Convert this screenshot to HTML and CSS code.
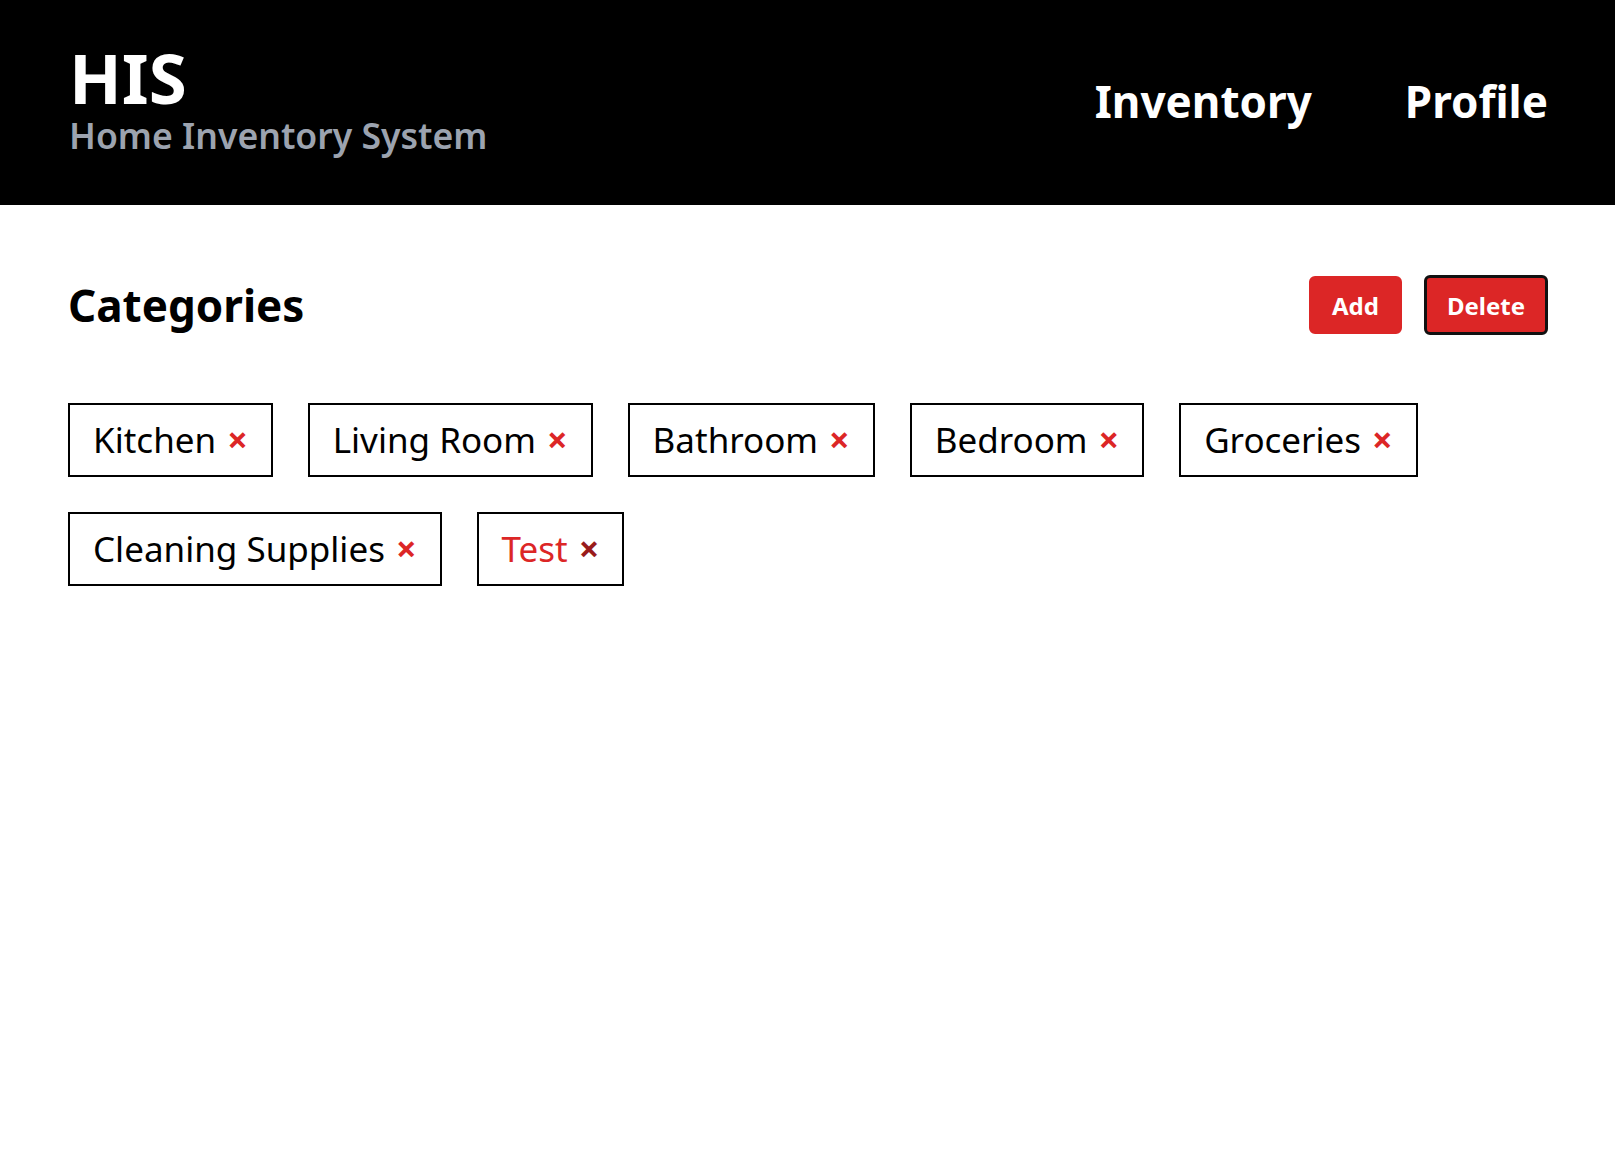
FILE: index.html
```html
<!DOCTYPE html>
<html lang="en">
<head>
<meta charset="utf-8">
<title>HIS - Home Inventory System</title>
<link rel="stylesheet" href="styles.css">
</head>
<body>
<header class="header">
  <div class="brand">
    <div class="brand-title">HIS</div>
    <div class="brand-sub">Home Inventory System</div>
  </div>
  <nav class="nav">
    <a class="nav-link" href="#">Inventory</a>
    <a class="nav-link" href="#">Profile</a>
  </nav>
</header>
<main class="main">
  <div class="toolbar">
    <h1 class="heading">Categories</h1>
    <div class="actions">
      <button class="btn">Add</button>
      <button class="btn btn-active">Delete</button>
    </div>
  </div>
  <ul class="tags">
    <li class="tag"><span class="tag-name">Kitchen</span><span class="tag-x">×</span></li>
    <li class="tag"><span class="tag-name">Living Room</span><span class="tag-x">×</span></li>
    <li class="tag"><span class="tag-name">Bathroom</span><span class="tag-x">×</span></li>
    <li class="tag"><span class="tag-name">Bedroom</span><span class="tag-x">×</span></li>
    <li class="tag"><span class="tag-name">Groceries</span><span class="tag-x">×</span></li>
    <li class="tag"><span class="tag-name">Cleaning Supplies</span><span class="tag-x">×</span></li>
    <li class="tag tag-hover"><span class="tag-name">Test</span><span class="tag-x">×</span></li>
  </ul>
</main>
</body>
</html>
```

FILE: styles.css
```css
* { box-sizing: border-box; }
html, body { margin: 0; padding: 0; background: #fff; }
body { font-family: "Noto Sans", "Open Sans", sans-serif; color: #000; }

.header {
  background: #000;
  height: 205px;
  display: flex;
  align-items: center;
  justify-content: space-between;
  padding: 0 67px 0 69px;
}
.brand {
  display: flex;
  flex-direction: column;
  align-self: flex-start;
  margin-top: 46px;
}
.brand-title {
  color: #fff;
  font-weight: 700;
  font-size: 69px;
  line-height: 62px;
}
.brand-sub {
  color: #9ca3af;
  font-weight: 600;
  font-size: 35.6px;
  line-height: 54px;
}
.nav { display: flex; gap: 93px; margin-bottom: 4px; }
.nav-link {
  color: #fff;
  text-decoration: none;
  font-weight: 700;
  font-size: 44px;
}

.main { padding: 70px 67px 0 68px; }
.toolbar {
  display: flex;
  align-items: center;
  justify-content: space-between;
  height: 60px;
}
.heading {
  margin: 0;
  font-size: 44px;
  font-weight: 700;
}
.actions { display: flex; gap: 22px; align-items: center; }
.btn {
  font-family: inherit;
  background: #dc2626;
  color: #fff;
  font-weight: 700;
  font-size: 24px;
  border: 2px solid #dc2626;
  border-radius: 6px;
  height: 58px;
  padding: 0 21px;
}
.btn-active { border: 3px solid #111; height: 60px; padding: 0 20px; }

.tags {
  list-style: none;
  margin: 68px 0 0;
  padding: 0;
  display: flex;
  flex-wrap: wrap;
  gap: 35px;
}
.tag {
  display: flex;
  align-items: center;
  gap: 11px;
  border: 2px solid #000;
  padding: 11px 23px 12px 23px;
  font-size: 35px;
}
.tag-x {
  color: #dc2626;
  font-weight: 700;
  font-size: 36px;
  line-height: 1;
}
.tag-hover .tag-name { color: #dc2626; }
.tag-hover .tag-x { color: #991b1b; }
```
